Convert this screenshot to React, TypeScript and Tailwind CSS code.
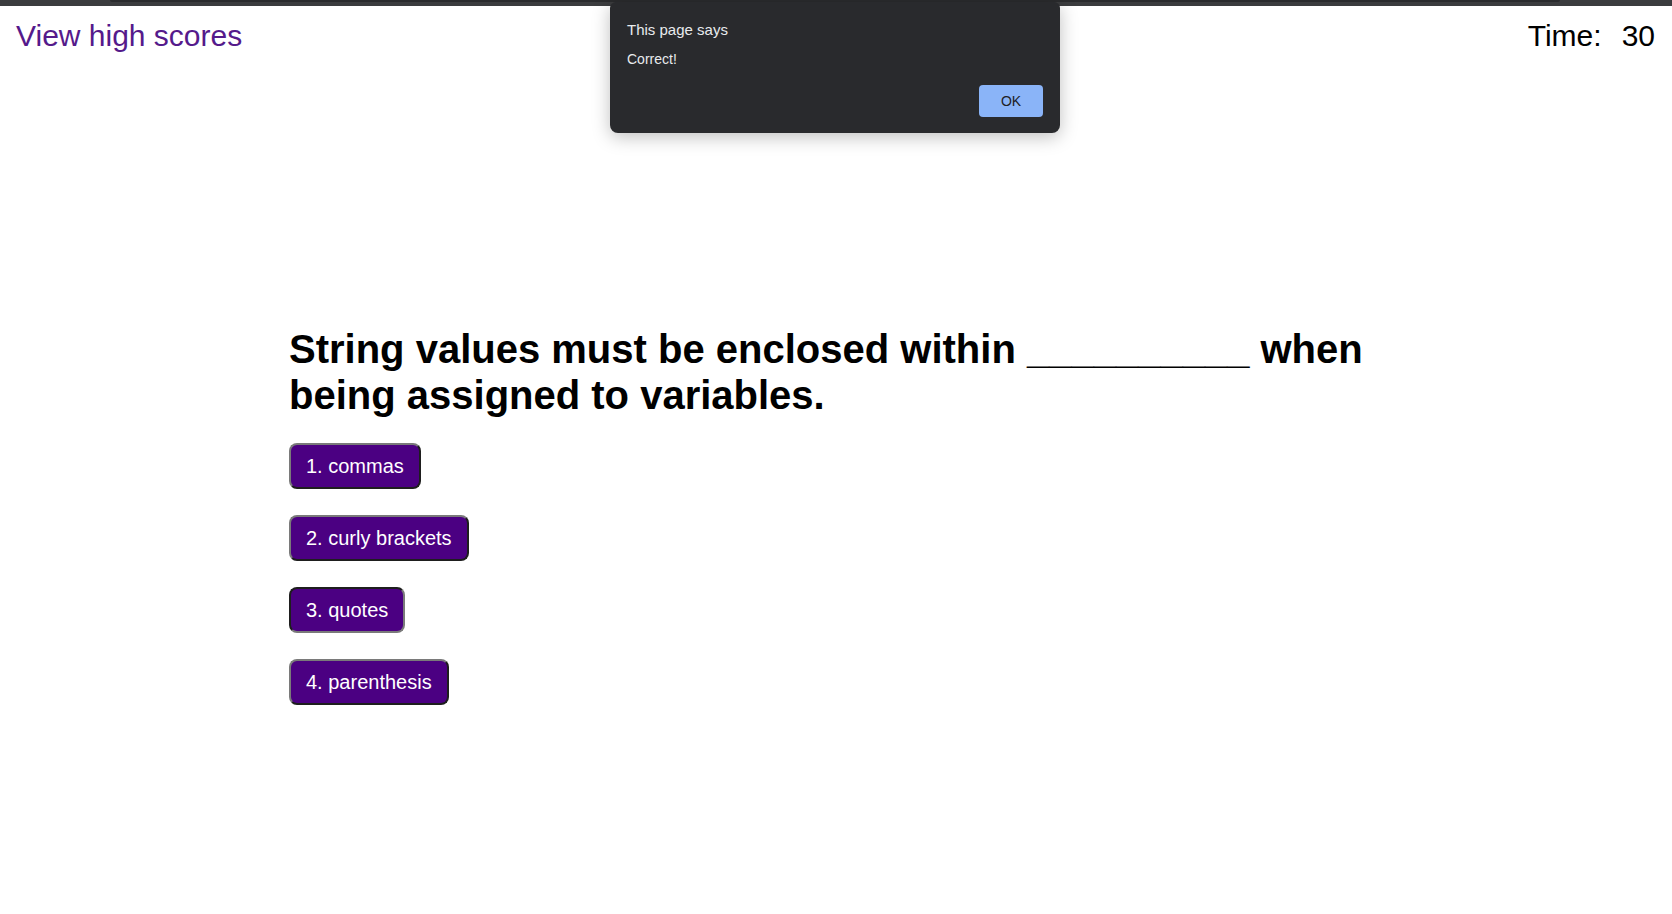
import React from "react";

const answers = ["1. commas", "2. curly brackets", "3. quotes", "4. parenthesis"];

export default function App() {
  return (
    <div className="relative min-h-screen bg-white font-['Liberation_Sans',Arial,sans-serif] text-black">
      {/* top browser strip */}
      <div className="flex h-[6px] bg-[#3b3c3e]">
        <div className="w-[110px]" />
        <div className="h-[2px] flex-1 rounded-b-sm bg-[#2a2b2d]" />
        <div className="w-[112px]" />
      </div>

      {/* header */}
      <header className="flex items-start justify-between px-4 pt-[13px] text-[30px] leading-[34.5px]">
        <a className="text-[#551a8b] cursor-pointer">View high scores</a>
        <div className="pr-[1px]">
          <span>Time:</span>
          <span className="ml-[20px]">30</span>
        </div>
      </header>

      {/* quiz */}
      <main className="mx-auto mt-[272px] w-[1094px]">
        <h1 className="text-[40px] font-bold leading-[46px]">
          String values must be enclosed within __________ when being assigned to variables.
        </h1>
        <div className="mt-[25.5px] flex flex-col items-start gap-[26px]">
          {answers.map((a, i) => (
            <button
              key={a}
              className={
                i === 2
                  ? "h-[46px] rounded-lg border-2 border-t-[#1e1e1e] border-l-[#1e1e1e] border-b-[#7a7a7a] border-r-[#7a7a7a] bg-[#4b0082] px-[15px] text-[20px] leading-[23px] text-white"
                  : "h-[46px] rounded-lg border-2 border-t-[#7a7a7a] border-l-[#7a7a7a] border-b-[#1e1e1e] border-r-[#1e1e1e] bg-[#4b0082] px-[15px] text-[20px] leading-[23px] text-white"
              }
            >
              {a}
            </button>
          ))}
        </div>
      </main>

      {/* alert dialog */}
      <div className="absolute left-[610px] top-[2px] flex h-[131px] w-[450px] flex-col rounded-b-lg rounded-t-md bg-[#292a2d] px-[17px] pt-[19px] shadow-[0_4px_18px_rgba(0,0,0,0.25)]">
        <div className="text-[15px] leading-[17px] text-[#e8eaed]">This page says</div>
        <div className="mt-[13px] text-[14px] leading-[16px] text-[#e8eaed]">Correct!</div>
        <div className="mt-auto mb-[16px] flex justify-end">
          <button className="h-[32px] w-[64px] rounded-[4px] bg-[#8ab4f8] text-[14px] text-[#202124]">OK</button>
        </div>
      </div>
    </div>
  );
}
